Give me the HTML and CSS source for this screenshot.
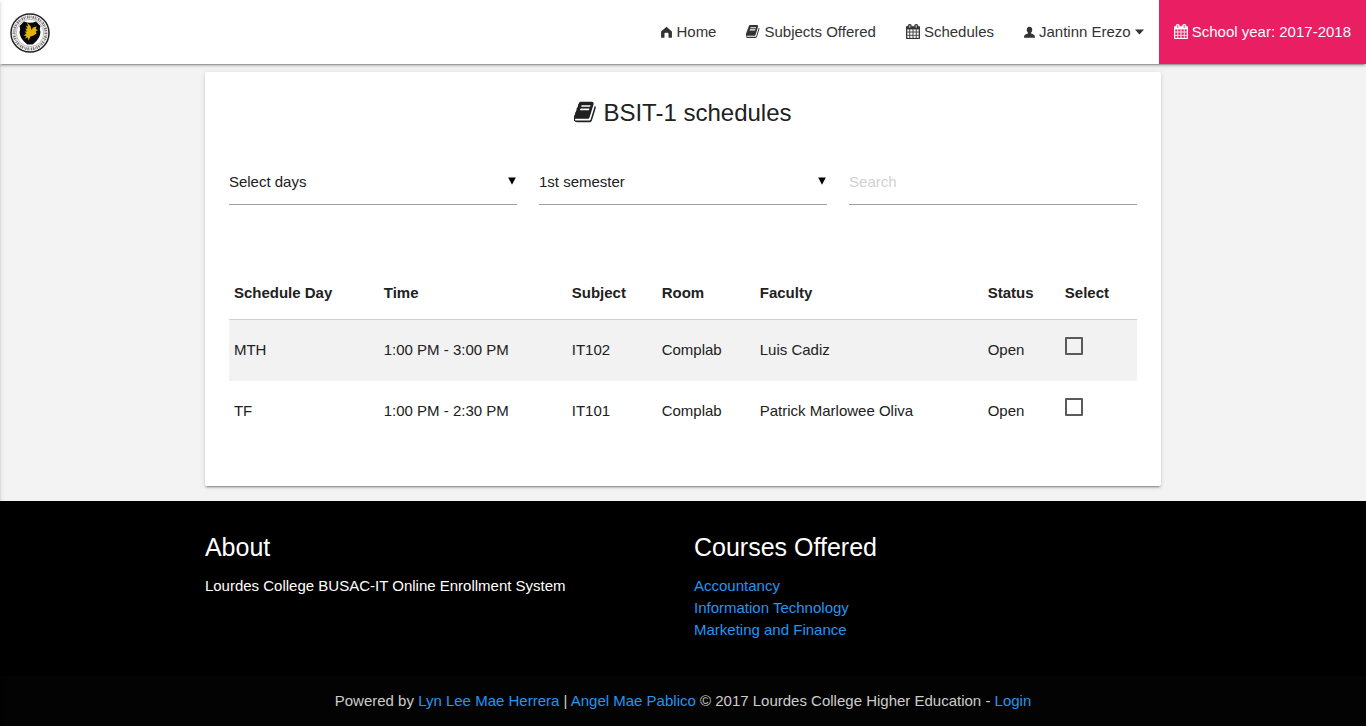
FILE: index.html
```html
<!DOCTYPE html>
<html lang="en">
<head>
<meta charset="utf-8">
<meta name="viewport" content="width=device-width, initial-scale=1">
<title>BSIT-1 schedules</title>
<link rel="stylesheet" href="styles.css">
</head>
<body>
<svg class="sprite" aria-hidden="true">
  <symbol id="book" viewBox="64 0 1664 1792"><path d="M1639 478q40 57 18 129l-275 906q-19 64-76.5 107.5t-122.5 43.5h-923q-77 0-148.5-53.5t-99.5-131.5q-24-67-2-127 0-4 3-27t4-37q1-8-3-21.5t-3-19.5q2-11 8-21t16.5-23.5 16.5-23.5q23-38 45-91.5t30-91.5q3-10 .5-30t-.5-28q3-11 17-28t17-23q21-36 42-92t25-90q1-9-2.5-32t.5-28q4-13 22-30.5t22-22.5q19-26 42.5-84.5t27.5-96.5q1-8-3-25.5t-2-26.5q2-8 9-18t18-23 17-21q8-12 16.5-30.5t15-35 16-36 19.5-32 26.5-23.5 36-11.5 47.5 5.5l-1 3q38-9 51-9h761q74 0 114 56t18 130l-274 906q-36 119-71.5 153.5t-128.5 34.5h-869q-27 0-38 15-11 16-1 43 24 70 144 70h923q29 0 56-15.5t35-41.5l300-987q7-22 5-57 38 15 59 43zm-1064 2q-4 13 2 22.5t20 9.5h608q13 0 25.5-9.5t16.5-22.5l21-64q4-13-2-22.5t-20-9.5h-608q-13 0-25.5 9.5t-16.5 22.5zm-83 256q-4 13 2 22.5t20 9.5h608q13 0 25.5-9.5t16.5-22.5l21-64q4-13-2-22.5t-20-9.5h-608q-13 0-25.5 9.5t-16.5 22.5z"/></symbol>
  <symbol id="calendar" viewBox="64 0 1664 1792"><path stroke="currentColor" stroke-width="36" d="M192 1664h288v-288h-288v288zm352 0h320v-288h-320v288zm-352-352h288v-320h-288v320zm352 0h320v-320h-320v320zm-352-384h288v-288h-288v288zm736 736h320v-288h-320v288zm-384-736h320v-288h-320v288zm768 736h288v-288h-288v288zm-384-352h320v-320h-320v320zm-352-864v-288q0-13-9.5-22.5t-22.5-9.5h-64q-13 0-22.5 9.5t-9.5 22.5v288q0 13 9.500 22.500t22.500 9.500h64q13 0 22.500-9.500t9.500-22.500zm736 864h288v-320h-288v320zm-384-384h320v-288h-320v288zm384 0h288v-288h-288v288zm32-480v-288q0-13-9.500-22.500t-22.500-9.500h-64q-13 0-22.500 9.500t-9.500 22.500v288q0 13 9.500 22.500t22.500 9.500h64q13 0 22.500-9.500t9.500-22.500zm384-64v1280q0 52-38 90t-90 38h-1408q-52 0-90-38t-38-90v-1280q0-52 38-90t90-38h128v-96q0-66 47-113t113-47h64q66 0 113 47t47 113v96h384v-96q0-66 47-113t113-47h64q66 0 113 47t47 113v96h128q52 0 90 38t38 90z"/></symbol>
  <symbol id="home" viewBox="0 0 12 14"><path d="M6 .8 11.900 5.800V12.800H8.200V8.200Q8.200 7.200 7.200 7.200H4.800Q3.800 7.200 3.800 8.200V12.800H.1V5.800Z"/></symbol>
  <symbol id="person" viewBox="0 0 12 14"><path d="M6 .8C8.200.8 9.100 2.400 9 4.200 8.900 5.600 8.200 6.700 7.700 7.200V8.100C9.800 8.900 12 9.300 12 12.600H0C0 9.300 2.200 8.900 4.300 8.100V7.200C3.800 6.700 3.100 5.600 3 4.200 2.900 2.400 3.800.8 6 .8Z"/></symbol>
  <symbol id="caret" viewBox="0 0 9 14"><path d="M0 4.500h9L4.500 9.500Z"/></symbol>
  <symbol id="triangle" viewBox="0 0 10 10"><path d="M1.200 1.500h7.600L5 8.800Z"/></symbol>
</svg>

<header class="navbar">
  <a class="brand" href="#" aria-label="Lourdes College">
    <svg class="logo" viewBox="0 0 40 40" aria-hidden="true">
      <circle cx="20" cy="20" r="19" fill="#fff" stroke="#222" stroke-width="1.500"/>
      <circle cx="20" cy="20" r="16" fill="none" stroke="#777" stroke-width="3" stroke-dasharray="1.200 .7 .6 .9 1.500 .8"/>
      <circle cx="20" cy="20" r="13.700" fill="#fff" stroke="#888" stroke-width=".6"/>
      <path fill="#080808" d="M14 8.500Q20 11 26 8.500L30.500 13Q29 16 30.500 19C30 25 26 29 22.500 31.500H17.500C14 29 10 25 9.500 19Q11 16 9.500 13Z"/>
      <path fill="#e5b20c" d="M17 9.500 20.500 13 21.500 17 23 14.500 26.500 13.500 25.800 16 28 17.500 25.800 18 26.500 20.500 23.500 22.500 20.500 23.500 18.500 27.500 17.800 24.500 15 25.500 16.500 23 13.500 22.500 16.500 20.500 14.500 18.500 17 18.500 15.200 15.500 17.500 16 15.800 12.500 18.200 13.500Z"/>
    </svg>
  </a>
  <nav class="menu" aria-label="Main">
    <a class="menu-link" href="#"><svg class="icon-narrow"><use href="#home"/></svg>Home</a>
    <a class="menu-link" href="#"><svg class="icon"><use href="#book"/></svg>Subjects Offered</a>
    <a class="menu-link" href="#"><svg class="icon"><use href="#calendar"/></svg>Schedules</a>
    <a class="menu-link" href="#"><svg class="icon-narrow"><use href="#person"/></svg>Jantinn Erezo<svg class="icon-caret"><use href="#caret"/></svg></a>
    <a class="menu-link menu-year" href="#"><svg class="icon"><use href="#calendar"/></svg>School year: 2017-2018</a>
  </nav>
</header>

<main class="container">
  <section class="card">
    <h1 class="card-title"><svg class="title-icon"><use href="#book"/></svg>BSIT-1 schedules</h1>
    <form class="filters">
      <div class="field">
        <select class="control" aria-label="Days"><option>Select days</option></select>
        <svg class="arrow"><use href="#triangle"/></svg>
      </div>
      <div class="field">
        <select class="control" aria-label="Semester"><option>1st semester</option></select>
        <svg class="arrow"><use href="#triangle"/></svg>
      </div>
      <div class="field">
        <input class="control control-text" type="text" placeholder="Search" aria-label="Search">
      </div>
    </form>
    <table class="schedule">
      <colgroup>
        <col class="col-day"><col class="col-time"><col class="col-subject"><col class="col-room"><col class="col-faculty"><col class="col-status"><col>
      </colgroup>
      <thead>
        <tr><th>Schedule Day</th><th>Time</th><th>Subject</th><th>Room</th><th>Faculty</th><th>Status</th><th>Select</th></tr>
      </thead>
      <tbody>
        <tr><td>MTH</td><td>1:00 PM - 3:00 PM</td><td>IT102</td><td>Complab</td><td>Luis Cadiz</td><td>Open</td><td><input class="check" type="checkbox" aria-label="Select IT102"></td></tr>
        <tr><td>TF</td><td>1:00 PM - 2:30 PM</td><td>IT101</td><td>Complab</td><td>Patrick Marlowee Oliva</td><td>Open</td><td><input class="check" type="checkbox" aria-label="Select IT101"></td></tr>
      </tbody>
    </table>
  </section>
</main>

<footer class="footer">
  <div class="container footer-grid">
    <section>
      <h2 class="footer-title">About</h2>
      <p class="footer-text">Lourdes College BUSAC-IT Online Enrollment System</p>
    </section>
    <section>
      <h2 class="footer-title">Courses Offered</h2>
      <ul class="footer-list">
        <li><a href="#">Accountancy</a></li>
        <li><a href="#">Information Technology</a></li>
        <li><a href="#">Marketing and Finance</a></li>
      </ul>
    </section>
  </div>
  <p class="copyright">Powered by <a href="#">Lyn Lee Mae Herrera</a> | <a href="#">Angel Mae Pablico</a> © 2017 Lourdes College Higher Education - <a href="#">Login</a></p>
</footer>
</body>
</html>
```

FILE: styles.css
```css
* { box-sizing: border-box; }

body {
  margin: 0;
  min-height: 100vh;
  display: flex;
  flex-direction: column;
  background: #f3f3f3;
  color: #212121;
  font: 15px/22px "Liberation Sans", Arial, sans-serif;
}

/* closed drawer, only its shadow reaches the window edge */
body::before {
  content: "";
  position: fixed;
  z-index: 2;
  top: 0;
  bottom: 0;
  left: -10px;
  width: 10px;
  box-shadow: 0 2px 2px rgba(0, 0, 0, .14), 0 1px 5px rgba(0, 0, 0, .12), 0 3px 1px -2px rgba(0, 0, 0, .2);
}

a { color: #2196f3; text-decoration: none; }
svg { fill: currentColor; flex: none; }
.sprite { display: none; }

.navbar {
  display: flex;
  justify-content: space-between;
  height: 64px;
  background: #fff;
  box-shadow: 0 2px 2px rgba(0, 0, 0, .14), 0 1px 5px rgba(0, 0, 0, .12), 0 3px 1px -2px rgba(0, 0, 0, .2);
}
.brand { display: flex; align-items: center; padding: 2px 10px 0; }
.logo { width: 40px; height: 40px; }
.menu { display: flex; }
.menu-link {
  display: flex;
  align-items: center;
  gap: 4px;
  padding: 0 15px;
  color: #333;
}
.menu-year { background: #e91e63; color: #fff; }
.icon { width: 14px; height: 15px; margin-bottom: 2px; }
.icon-narrow { width: 11px; height: 13px; }
.icon-caret { width: 9px; height: 14px; }

.container { width: 70%; max-width: 1280px; margin: 0 auto; }

.card {
  margin: 8px 0 15px;
  padding: 24px 24px 44px;
  border-radius: 2px;
  background: #fff;
  box-shadow: 0 2px 2px rgba(0, 0, 0, .14), 0 1px 5px rgba(0, 0, 0, .12), 0 3px 1px -2px rgba(0, 0, 0, .2);
}
.card-title {
  display: flex;
  justify-content: center;
  align-items: center;
  gap: 6px;
  margin: 0;
  font-size: 24px;
  font-weight: 400;
  line-height: 34px;
}
.title-icon { width: 23px; height: 24px; margin-bottom: 2px; }

.filters {
  display: grid;
  grid-template-columns: repeat(3, 1fr);
  gap: 22px;
  padding: 30px 0 62px;
}
.field { position: relative; }
.control {
  display: block;
  width: 100%;
  height: 45px;
  padding: 0;
  border: 0;
  border-bottom: 1px solid #9e9e9e;
  border-radius: 0;
  outline: 0;
  appearance: none;
  background: transparent;
  color: #212121;
  font: inherit;
}
.control-text { padding-bottom: 2px; }
.control::placeholder { color: #d1d1d1; }
.arrow {
  position: absolute;
  right: 0;
  top: 16px;
  width: 10px;
  height: 10px;
  fill: #000;
  pointer-events: none;
}

.schedule { width: 100%; table-layout: fixed; border-collapse: collapse; }
.col-day { width: 16.5%; }
.col-time { width: 20.7%; }
.col-subject { width: 9.9%; }
.col-room { width: 10.8%; }
.col-faculty { width: 25.1%; }
.col-status { width: 8.5%; }
.schedule th, .schedule td { padding: 15px 5px; text-align: left; }
.schedule thead { border-bottom: 1px solid #d0d0d0; }
.schedule td { height: 61px; }
.schedule tbody tr:nth-child(odd) { background: #f2f2f2; }
.check {
  display: block;
  width: 18px;
  height: 18px;
  margin: 0 0 8px;
  border: 2px solid #5a5a5a;
  border-radius: 1px;
  appearance: none;
}
.check:checked { background: #5a5a5a; }

.footer { flex: 1; display: flex; flex-direction: column; background: #000; color: #fff; }
.footer-grid {
  flex: 1;
  display: grid;
  grid-template-columns: 1fr 1fr;
  gap: 22px;
  padding: 32px 0 35px;
}
.footer-title { margin: 0 0 14px; font-size: 25px; font-weight: 400; line-height: 28px; }
.footer-text { margin: 0; }
.footer-list { margin: 0; padding: 0; list-style: none; }
.copyright {
  margin: 0;
  padding: 14px 0;
  background: #030303;
  color: #cdcdcd;
  text-align: center;
}
```
